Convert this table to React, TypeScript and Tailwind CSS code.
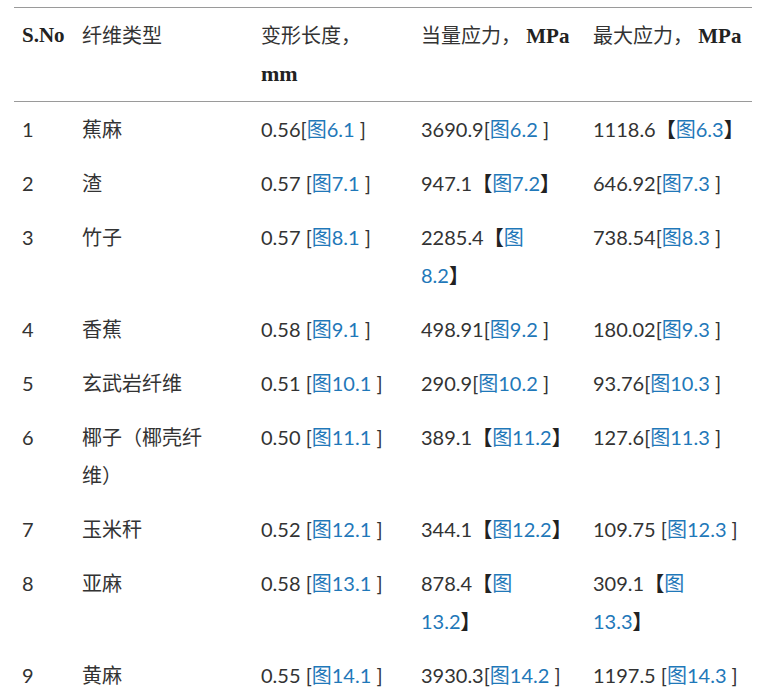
import React from "react";

type Cell = { pre: string; open: string; link: React.ReactNode; close: string };

const L = (pre: string, open: string, link: React.ReactNode, close: string): Cell => ({ pre, open, link, close });

const rows: { n: string; name: React.ReactNode; c: Cell[] }[] = [
  { n: "1", name: "蕉麻", c: [L("0.56", "[", "图6.1 ", "]"), L("3690.9", "[", "图6.2 ", "]"), L("1118.6", "【", "图6.3", "】")] },
  { n: "2", name: "渣", c: [L("0.57 ", "[", "图7.1 ", "]"), L("947.1", "【", "图7.2", "】"), L("646.92", "[", "图7.3 ", "]")] },
  { n: "3", name: "竹子", c: [L("0.57 ", "[", "图8.1 ", "]"), L("2285.4", "【", <>图<br />8.2</>, "】"), L("738.54", "[", "图8.3 ", "]")] },
  { n: "4", name: "香蕉", c: [L("0.58 ", "[", "图9.1 ", "]"), L("498.91", "[", "图9.2 ", "]"), L("180.02", "[", "图9.3 ", "]")] },
  { n: "5", name: "玄武岩纤维", c: [L("0.51 ", "[", "图10.1 ", "]"), L("290.9", "[", "图10.2 ", "]"), L("93.76", "[", "图10.3 ", "]")] },
  { n: "6", name: <>椰子（椰壳纤<br />维）</>, c: [L("0.50 ", "[", "图11.1 ", "]"), L("389.1", "【", "图11.2", "】"), L("127.6", "[", "图11.3 ", "]")] },
  { n: "7", name: "玉米秆", c: [L("0.52 ", "[", "图12.1 ", "]"), L("344.1", "【", "图12.2", "】"), L("109.75 ", "[", "图12.3 ", "]")] },
  { n: "8", name: "亚麻", c: [L("0.58 ", "[", "图13.1 ", "]"), L("878.4", "【", <>图<br />13.2</>, "】"), L("309.1", "【", <>图<br />13.3</>, "】")] },
  { n: "9", name: "黄麻", c: [L("0.55 ", "[", "图14.1 ", "]"), L("3930.3", "[", "图14.2 ", "]"), L("1197.5 ", "[", "图14.3 ", "]")] },
];

function Ref({ cell }: { cell: Cell }) {
  const full = cell.open === "【";
  return (
    <span className="whitespace-pre">
      {cell.pre}
      <span className={full ? "font-bold text-[#222]" : ""}>{cell.open}</span>
      <span className="text-[#1f78b9]">{cell.link}</span>
      <span className={full ? "font-bold text-[#222]" : ""}>{cell.close}</span>
    </span>
  );
}

export default function App() {
  const font = { fontFamily: 'Lato, "Noto Sans CJK SC", sans-serif' };
  const head = { fontFamily: '"Liberation Serif", "Noto Sans CJK SC", serif' };
  return (
    <div className="bg-white w-[762px] h-[691px] overflow-hidden pt-[7px]">
      <table
        className="ml-[14px] w-[738px] table-fixed border-collapse text-[20px] leading-[38px] text-[#333]"
        style={font}
      >
        <colgroup>
          <col className="w-[60px]" />
          <col className="w-[179px]" />
          <col className="w-[160px]" />
          <col className="w-[172px]" />
          <col className="w-[167px]" />
        </colgroup>
        <thead>
          <tr className="border-t border-b border-[#9a9a9a] text-left align-top">
            <th className="px-2 py-2 font-bold text-[#222] text-[21px]" style={head}>S.No</th>
            <th className="px-2 py-2 font-normal text-[#333]" style={font}>纤维类型</th>
            <th className="px-2 py-2 font-normal text-[#333]" style={font}>
              变形长度，<br />
              <span className="font-bold text-[#222] text-[22px]" style={head}>mm</span>
            </th>
            <th className="px-2 py-2 font-normal text-[#333] whitespace-nowrap" style={font}>
              当量应力，<span className="font-bold text-[#222] text-[21px]" style={head}> MPa</span>
            </th>
            <th className="px-2 py-2 font-normal text-[#333] whitespace-nowrap" style={font}>
              最大应力，<span className="font-bold text-[#222] text-[21px]" style={head}> MPa</span>
            </th>
          </tr>
        </thead>
        <tbody>
          {rows.map((r) => (
            <tr key={r.n} className="align-top">
              <td className="px-2 py-2">{r.n}</td>
              <td className="px-2 py-2 whitespace-nowrap">{r.name}</td>
              {r.c.map((c, i) => (
                <td key={i} className="px-2 py-2 whitespace-nowrap">
                  <Ref cell={c} />
                </td>
              ))}
            </tr>
          ))}
        </tbody>
      </table>
    </div>
  );
}
